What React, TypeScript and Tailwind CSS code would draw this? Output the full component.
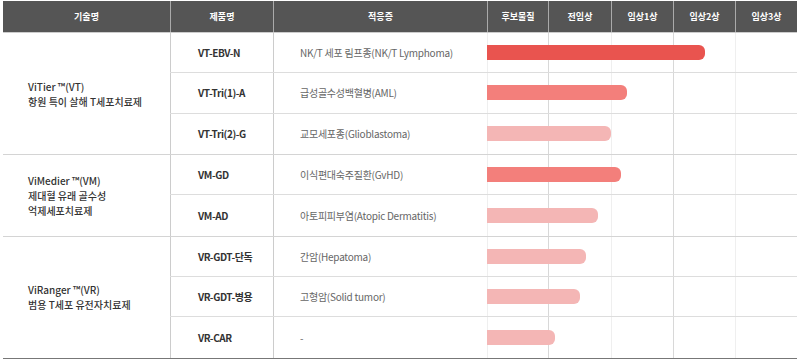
import React from "react"

type Row = { code: string; indication: string; end: number; color: string }
type Group = { lines: string[]; rows: Row[] }

const RED = "bg-[#e9544f]"
const MID = "bg-[#f37f7b]"
const LIGHT = "bg-[#f4b6b5]"

const groups: Group[] = [
  {
    lines: ["ViTier ™(VT)", "항원 특이 살해 T세포치료제"],
    rows: [
      { code: "VT-EBV-N", indication: "NK/T 세포 림프종(NK/T Lymphoma)", end: 218, color: RED },
      { code: "VT-Tri(1)-A", indication: "급성골수성백혈병(AML)", end: 140, color: MID },
      { code: "VT-Tri(2)-G", indication: "교모세포종(Glioblastoma)", end: 124, color: LIGHT },
    ],
  },
  {
    lines: ["ViMedier ™(VM)", "제대혈 유래 골수성", "억제세포치료제"],
    rows: [
      { code: "VM-GD", indication: "이식편대숙주질환(GvHD)", end: 134, color: MID },
      { code: "VM-AD", indication: "아토피피부염(Atopic Dermatitis)", end: 111, color: LIGHT },
    ],
  },
  {
    lines: ["ViRanger ™(VR)", "범용 T세포 유전자치료제"],
    rows: [
      { code: "VR-GDT-단독", indication: "간암(Hepatoma)", end: 99, color: LIGHT },
      { code: "VR-GDT-병용", indication: "고형암(Solid tumor)", end: 93, color: LIGHT },
      { code: "VR-CAR", indication: "-", end: 68, color: LIGHT },
    ],
  },
]

const phases = ["후보물질", "전임상", "임상1상", "임상2상", "임상3상"]

const BarCells = () => (
  <div className="absolute inset-0 grid grid-cols-[61px_63px_62px_62px_62px]">
    <div className="border-l border-[#efefef]" />
    <div className="border-l border-[#d8d8d8]" />
    <div className="border-l border-[#efefef]" />
    <div className="border-l border-[#d8d8d8]" />
    <div className="border-l border-[#efefef]" />
  </div>
)

export default function App() {
  return (
    <div
      className="w-[800px] h-[359px] bg-white pt-px px-[3px]"
      style={{ fontFamily: '"Noto Sans CJK KR", "Noto Sans", sans-serif' }}
    >
      <div className="w-[794px]">
        {/* HEADER */}
        <div className="grid grid-cols-[167px_103px_214px_61px_63px_62px_62px_62px] h-[32px] bg-[#555555] border-b border-[#cccccc] text-white text-[9px] font-bold">
          <div className="flex items-center justify-center">기술명</div>
          <div className="flex items-center justify-center border-l border-[#aaaaaa]">제품명</div>
          <div className="flex items-center justify-center border-l border-[#aaaaaa]">적응증</div>
          {phases.map((p) => (
            <div key={p} className="flex items-center justify-center border-l border-[#aaaaaa]">
              {p}
            </div>
          ))}
        </div>

        {/* BODY */}
        <div className="border-b border-[#777777]">
          {groups.map((g, gi) => (
            <div
              key={gi}
              className={`flex ${gi < groups.length - 1 ? "border-b border-[#d4d4d4]" : ""}`}
            >
              <div className="w-[167px] shrink-0 flex flex-col justify-center pl-[25px] text-[10px] leading-[15px] font-medium text-[#333333]">
                {g.lines.map((l) => (
                  <div key={l}>{l}</div>
                ))}
              </div>
              <div className="flex-1">
                {g.rows.map((r, ri) => (
                  <div
                    key={r.code}
                    className={`grid grid-cols-[103px_214px_310px] ${
                      ri === 0 ? "h-[40px]" : "h-[40.5px]"
                    } ${ri < g.rows.length - 1 ? "border-b border-[#dddddd]" : ""}`}
                  >
                    <div className="flex items-center pl-[27px] border-l border-[#cccccc] text-[10px] font-bold tracking-[-0.4px] text-[#333333]">
                      {r.code}
                    </div>
                    <div className="flex items-center pl-[26px] border-l border-[#cccccc] text-[10px] tracking-[-0.25px] text-[#666666]">
                      {r.indication}
                    </div>
                    <div className="relative">
                      <BarCells />
                      <div className="absolute inset-0 flex items-center">
                        <div
                          className={`h-[15px] rounded-r-[6px] ${r.color}`}
                          style={{ width: r.end }}
                        />
                      </div>
                    </div>
                  </div>
                ))}
              </div>
            </div>
          ))}
        </div>
      </div>
    </div>
  )
}
